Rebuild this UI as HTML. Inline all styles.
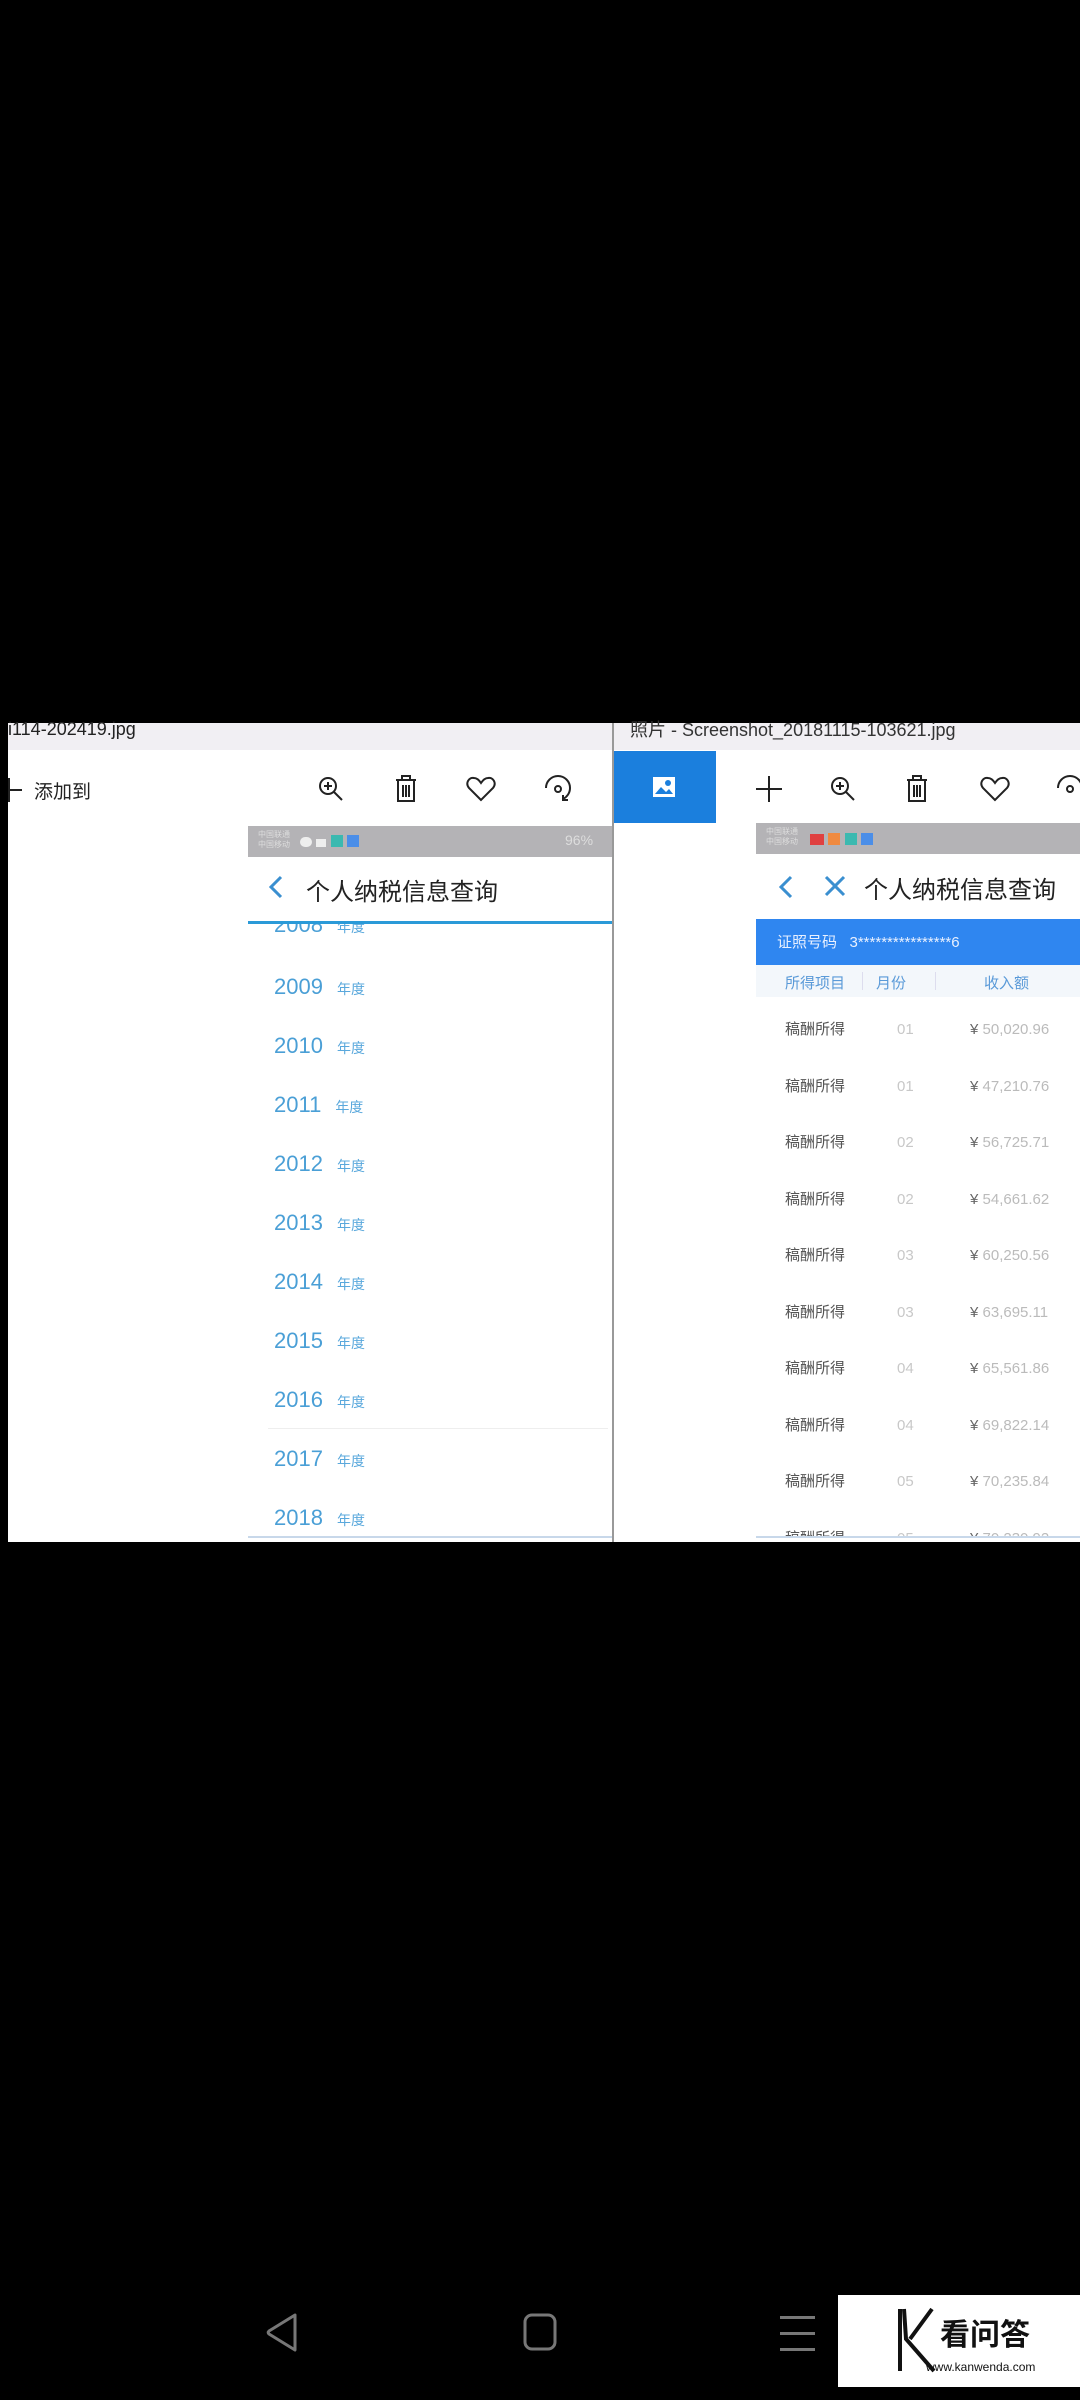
<!DOCTYPE html>
<html><head><meta charset="utf-8"><style>
*{margin:0;padding:0;box-sizing:border-box}
body{width:1080px;height:2400px;background:#000;position:relative;overflow:hidden;font-family:"Liberation Sans","Noto Sans CJK SC",sans-serif}
.a{position:absolute}
.yr{position:absolute;left:274px;font-size:22px;color:#4a9fd6;}
.yr span{font-size:14px;margin-left:14px;color:#5aa8dc}
.row{position:absolute;left:756px;width:324px;height:30px;font-size:15px;line-height:24px}
.row .c1{position:absolute;left:29px;color:#555}
.row .c2{position:absolute;left:141px;color:#c8c8c8}
.row .c3{position:absolute;left:214px;color:#bbb;white-space:nowrap}
.row .c3 b{color:#666;font-weight:normal}
</style></head><body>
<div class="a" style="left:8px;top:723px;width:1072px;height:819px;background:#fff"></div>
<div class="a" style="left:8px;top:723px;width:1072px;height:27px;background:#f1eff3"></div>
<div class="a" style="left:8px;top:719px;font-size:18px;color:#222">i114-202419.jpg</div>
<div class="a" style="left:630px;top:716px;font-size:18px;color:#333">照片 - Screenshot_20181115-103621.jpg</div>
<div class="a" style="left:612px;top:723px;width:2px;height:819px;background:#999"></div>
<!-- left toolbar -->
<div class="a" style="left:8px;top:778px;width:2px;height:24px;background:#222"></div>
<div class="a" style="left:8px;top:789px;width:14px;height:2px;background:#222"></div>
<div class="a" style="left:34px;top:777px;font-size:19px;color:#222">添加到</div>
<svg class="a" style="left:316px;top:774px" width="30" height="30" viewBox="0 0 30 30" fill="none" stroke="#222" stroke-width="2"><circle cx="12" cy="12" r="8"/><path d="M18 18l8 8M12 8v8M8 12h8"/></svg>
<svg class="a" style="left:394px;top:774px" width="24" height="30" viewBox="0 0 24 30" fill="none" stroke="#222" stroke-width="2"><path d="M2 6h20M8 6V2h8v4M4 6v21h16V6M9 11v12M12 11v12M15 11v12"/></svg>
<svg class="a" style="left:466px;top:776px" width="30" height="26" viewBox="0 0 30 26" fill="none" stroke="#222" stroke-width="2"><path d="M15 24L3 12C-1 7 3 1 8 2c3 0 5 2 7 5 2-3 4-5 7-5 5-1 9 5 5 10z"/></svg>
<svg class="a" style="left:543px;top:774px" width="30" height="30" viewBox="0 0 30 30" fill="none" stroke="#222" stroke-width="2"><path d="M3 14a12 12 0 0 1 24 0c0 5-3 9-7 11M20 21v5h5"/><circle cx="15" cy="15" r="3"/></svg>
<!-- left phone -->
<div class="a" style="left:248px;top:826px;width:364px;height:31px;background:#b4b3b6"></div>
<div class="a" style="left:258px;top:830px;font-size:8px;color:#ddd;line-height:10px">中国联通<br>中国移动</div>
<div class="a" style="left:300px;top:834px;width:60px;height:14px;"><span style="display:inline-block;width:12px;height:10px;background:#eee;border-radius:6px"></span> <span style="display:inline-block;width:10px;height:8px;background:#eee"></span> <span style="display:inline-block;width:12px;height:12px;background:#3bb9b0"></span> <span style="display:inline-block;width:12px;height:12px;background:#4b8ee8"></span></div>
<div class="a" style="left:565px;top:832px;font-size:14px;color:#ddd">96%</div>
<svg class="a" style="left:268px;top:874px" width="16" height="26" viewBox="0 0 16 26" fill="none" stroke="#3a8fd0" stroke-width="3"><path d="M13 3L3 13l10 10"/></svg>
<div class="a" style="left:306px;top:872px;font-size:24px;color:#222">个人纳税信息查询</div>
<div class="a" style="left:248px;top:921px;width:364px;height:3px;background:#2a9ad8"></div>
<div class="a" style="left:248px;top:924px;width:364px;height:612px;overflow:hidden">
<div class="yr" style="left:26px;top:-12px">2008<span>年度</span></div>
<div class="yr" style="left:26px;top:50px">2009<span>年度</span></div>
<div class="yr" style="left:26px;top:109px">2010<span>年度</span></div>
<div class="yr" style="left:26px;top:168px">2011<span>年度</span></div>
<div class="yr" style="left:26px;top:227px">2012<span>年度</span></div>
<div class="yr" style="left:26px;top:286px">2013<span>年度</span></div>
<div class="yr" style="left:26px;top:345px">2014<span>年度</span></div>
<div class="yr" style="left:26px;top:404px">2015<span>年度</span></div>
<div class="yr" style="left:26px;top:463px">2016<span>年度</span></div>
<div class="a" style="left:20px;top:504px;width:340px;height:1px;background:#eee"></div>
<div class="yr" style="left:26px;top:522px">2017<span>年度</span></div>
<div class="yr" style="left:26px;top:581px">2018<span>年度</span></div>
</div>
<div class="a" style="left:248px;top:1536px;width:364px;height:2px;background:#c8d8ea"></div>
<!-- right -->
<div class="a" style="left:614px;top:751px;width:102px;height:72px;background:#1b7fdd"></div>
<svg class="a" style="left:652px;top:776px" width="24" height="22" viewBox="0 0 24 22"><rect x="1" y="1" width="22" height="20" fill="#fff"/><path d="M3 18l6-7 5 5 3-3 4 5z" fill="#1b7fdd"/><circle cx="16" cy="7" r="3" fill="#1b7fdd"/></svg>
<div class="a" style="left:756px;top:788px;width:26px;height:2px;background:#222"></div>
<div class="a" style="left:768px;top:776px;width:2px;height:26px;background:#222"></div>
<svg class="a" style="left:828px;top:774px" width="30" height="30" viewBox="0 0 30 30" fill="none" stroke="#222" stroke-width="2"><circle cx="12" cy="12" r="8"/><path d="M18 18l8 8M12 8v8M8 12h8"/></svg>
<svg class="a" style="left:905px;top:774px" width="24" height="30" viewBox="0 0 24 30" fill="none" stroke="#222" stroke-width="2"><path d="M2 6h20M8 6V2h8v4M4 6v21h16V6M9 11v12M12 11v12M15 11v12"/></svg>
<svg class="a" style="left:980px;top:776px" width="30" height="26" viewBox="0 0 30 26" fill="none" stroke="#222" stroke-width="2"><path d="M15 24L3 12C-1 7 3 1 8 2c3 0 5 2 7 5 2-3 4-5 7-5 5-1 9 5 5 10z"/></svg>
<svg class="a" style="left:1055px;top:774px" width="25" height="30" viewBox="0 0 25 30" fill="none" stroke="#222" stroke-width="2"><path d="M3 14a12 12 0 0 1 24 0"/><circle cx="15" cy="15" r="3"/></svg>
<div class="a" style="left:756px;top:823px;width:324px;height:31px;background:#b4b3b6"></div>
<div class="a" style="left:766px;top:827px;font-size:8px;color:#ddd;line-height:10px">中国联通<br>中国移动</div>
<div class="a" style="left:810px;top:832px;"><span style="display:inline-block;width:14px;height:11px;background:#e04040"></span> <span style="display:inline-block;width:12px;height:12px;background:#f08a40"></span> <span style="display:inline-block;width:12px;height:12px;background:#3bb9b0"></span> <span style="display:inline-block;width:12px;height:12px;background:#4b8ee8"></span></div>
<svg class="a" style="left:778px;top:874px" width="16" height="26" viewBox="0 0 16 26" fill="none" stroke="#3a8fd0" stroke-width="3"><path d="M13 3L3 13l10 10"/></svg>
<svg class="a" style="left:824px;top:875px" width="22" height="22" viewBox="0 0 22 22" fill="none" stroke="#3a8fd0" stroke-width="3"><path d="M2 2l18 18M20 2L2 20"/></svg>
<div class="a" style="left:864px;top:870px;font-size:24px;color:#222;white-space:nowrap">个人纳税信息查询</div>
<div class="a" style="left:756px;top:919px;width:324px;height:46px;background:#2f86f0"></div>
<div class="a" style="left:777px;top:931px;font-size:15px;color:#e8f0ff;white-space:nowrap">证照号码&nbsp;&nbsp;&nbsp;3****************6</div>
<div class="a" style="left:756px;top:965px;width:324px;height:32px;background:#f3f7fb"></div>
<div class="a" style="left:785px;top:972px;font-size:15px;color:#5a9ad8">所得项目</div>
<div class="a" style="left:876px;top:972px;font-size:15px;color:#5a9ad8">月份</div>
<div class="a" style="left:984px;top:972px;font-size:15px;color:#5a9ad8">收入额</div>
<div class="a" style="left:862px;top:972px;width:1px;height:18px;background:#dde"></div>
<div class="a" style="left:935px;top:972px;width:1px;height:18px;background:#dde"></div>
<div class="a" style="left:756px;top:997px;width:324px;height:539px;overflow:hidden">
<div class="row" style="left:0;top:21px"><span class="c1">稿酬所得</span><span class="c2">01</span><span class="c3"><b>¥</b> 50,020.96</span></div>
<div class="row" style="left:0;top:78px"><span class="c1">稿酬所得</span><span class="c2">01</span><span class="c3"><b>¥</b> 47,210.76</span></div>
<div class="row" style="left:0;top:134px"><span class="c1">稿酬所得</span><span class="c2">02</span><span class="c3"><b>¥</b> 56,725.71</span></div>
<div class="row" style="left:0;top:191px"><span class="c1">稿酬所得</span><span class="c2">02</span><span class="c3"><b>¥</b> 54,661.62</span></div>
<div class="row" style="left:0;top:247px"><span class="c1">稿酬所得</span><span class="c2">03</span><span class="c3"><b>¥</b> 60,250.56</span></div>
<div class="row" style="left:0;top:304px"><span class="c1">稿酬所得</span><span class="c2">03</span><span class="c3"><b>¥</b> 63,695.11</span></div>
<div class="row" style="left:0;top:360px"><span class="c1">稿酬所得</span><span class="c2">04</span><span class="c3"><b>¥</b> 65,561.86</span></div>
<div class="row" style="left:0;top:417px"><span class="c1">稿酬所得</span><span class="c2">04</span><span class="c3"><b>¥</b> 69,822.14</span></div>
<div class="row" style="left:0;top:473px"><span class="c1">稿酬所得</span><span class="c2">05</span><span class="c3"><b>¥</b> 70,235.84</span></div>
<div class="row" style="left:0;top:530px"><span class="c1">稿酬所得</span><span class="c2">05</span><span class="c3"><b>¥</b> 70,230.92</span></div>
</div>
<div class="a" style="left:756px;top:1536px;width:324px;height:2px;background:#c8d8ea"></div>
<!-- nav bar -->
<svg class="a" style="left:262px;top:2312px" width="40" height="40" viewBox="0 0 40 40" fill="none" stroke="#777" stroke-width="3"><path d="M33 3L7 19c-1 1-1 2 0 3l26 16z" stroke-linejoin="round"/></svg>
<svg class="a" style="left:520px;top:2312px" width="40" height="40" viewBox="0 0 40 40" fill="none" stroke="#777" stroke-width="3"><rect x="5" y="3" width="30" height="34" rx="7"/></svg>
<div class="a" style="left:780px;top:2316px;width:35px;height:3px;background:#777"></div>
<div class="a" style="left:780px;top:2332px;width:35px;height:3px;background:#777"></div>
<div class="a" style="left:780px;top:2348px;width:35px;height:3px;background:#777"></div>
<div class="a" style="left:838px;top:2295px;width:242px;height:92px;background:#fff"></div>
<svg class="a" style="left:896px;top:2305px" width="40" height="72" viewBox="0 0 40 72" fill="none" stroke="#111" stroke-width="4"><path d="M4 4v62M8 4l2 30 28 32M36 4L14 34"/></svg>
<div class="a" style="left:940px;top:2310px;font-size:30px;font-weight:bold;color:#111;font-family:'Noto Sans CJK SC',sans-serif">看问答</div>
<div class="a" style="left:926px;top:2360px;font-size:12px;color:#111">www.kanwenda.com</div>
</body></html>
